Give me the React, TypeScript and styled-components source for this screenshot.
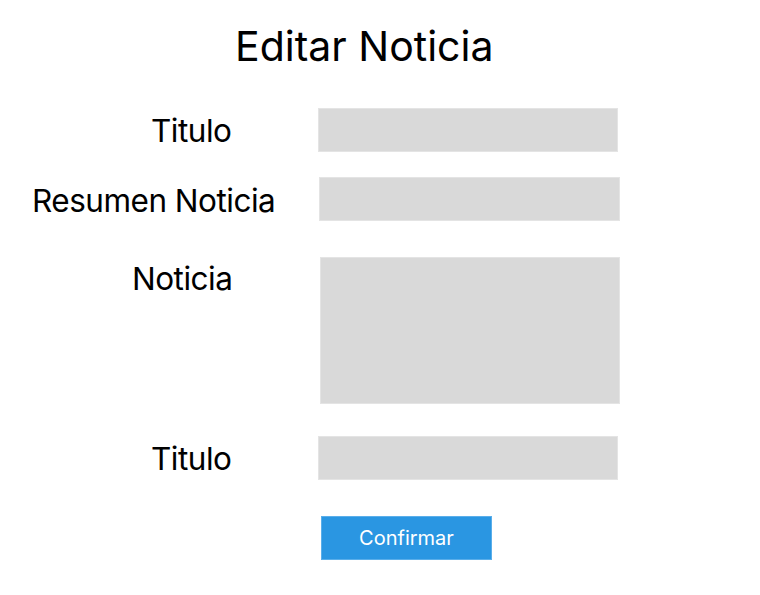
import React from "react";
import styled, { createGlobalStyle } from "styled-components";

const Global = createGlobalStyle`
  html, body { margin: 0; padding: 0; background: #ffffff; }
  body { font-family: Inter, "Noto Sans", sans-serif; color: #000; }
`;

const Page = styled.div`
  width: 760px;
  height: 595px;
  display: flex;
  flex-direction: column;
  padding-top: 22px;
  box-sizing: border-box;
`;

const Title = styled.h1`
  margin: 0 0 0 235px;
  font-size: 41px;
  font-weight: 400;
  line-height: 48px;
`;

const Form = styled.div`
  display: flex;
  flex-direction: column;
  margin-top: 38px;
`;

const Row = styled.div<{ $gap?: number }>`
  display: flex;
  align-items: flex-start;
  margin-top: ${(p) => p.$gap ?? 0}px;
`;

const LabelCell = styled.div`
  width: 318px;
  flex: none;
`;

const Label = styled.label<{ $left: number; $top: number }>`
  display: block;
  margin-left: ${(p) => p.$left}px;
  padding-top: ${(p) => p.$top}px;
  font-size: 31.5px;
  letter-spacing: -0.5px;
  line-height: 34px;
  white-space: nowrap;
`;

const Field = styled.div<{ $h: number; $w?: number; $shift?: number }>`
  width: ${(p) => p.$w ?? 300}px;
  height: ${(p) => p.$h}px;
  margin-left: ${(p) => p.$shift ?? 0}px;
  background: #d9d9d9;
  border: 1px solid #e4e4e4;
  box-sizing: border-box;
`;

const Button = styled.button`
  margin: 36px 0 0 321px;
  width: 171px;
  height: 44px;
  background: #2a96e2;
  border: 1px solid #5aaeea;
  color: #ffffff;
  font-family: Inter, "Noto Sans", sans-serif;
  font-size: 20px;
  padding: 0;
  cursor: pointer;
`;

export default function App() {
  return (
    <>
      <Global />
      <Page>
        <Title>Editar Noticia</Title>
        <Form>
          <Row>
            <LabelCell>
              <Label $left={151} $top={6}>Titulo</Label>
            </LabelCell>
            <Field $h={44} />
          </Row>
          <Row $gap={25}>
            <LabelCell>
              <Label $left={32} $top={7}>Resumen Noticia</Label>
            </LabelCell>
            <Field $h={44} $w={301} $shift={1} />
          </Row>
          <Row $gap={36}>
            <LabelCell>
              <Label $left={132} $top={5}>Noticia</Label>
            </LabelCell>
            <Field $h={147} $shift={2} />
          </Row>
          <Row $gap={32}>
            <LabelCell>
              <Label $left={151} $top={6}>Titulo</Label>
            </LabelCell>
            <Field $h={44} />
          </Row>
        </Form>
        <Button>Confirmar</Button>
      </Page>
    </>
  );
}
